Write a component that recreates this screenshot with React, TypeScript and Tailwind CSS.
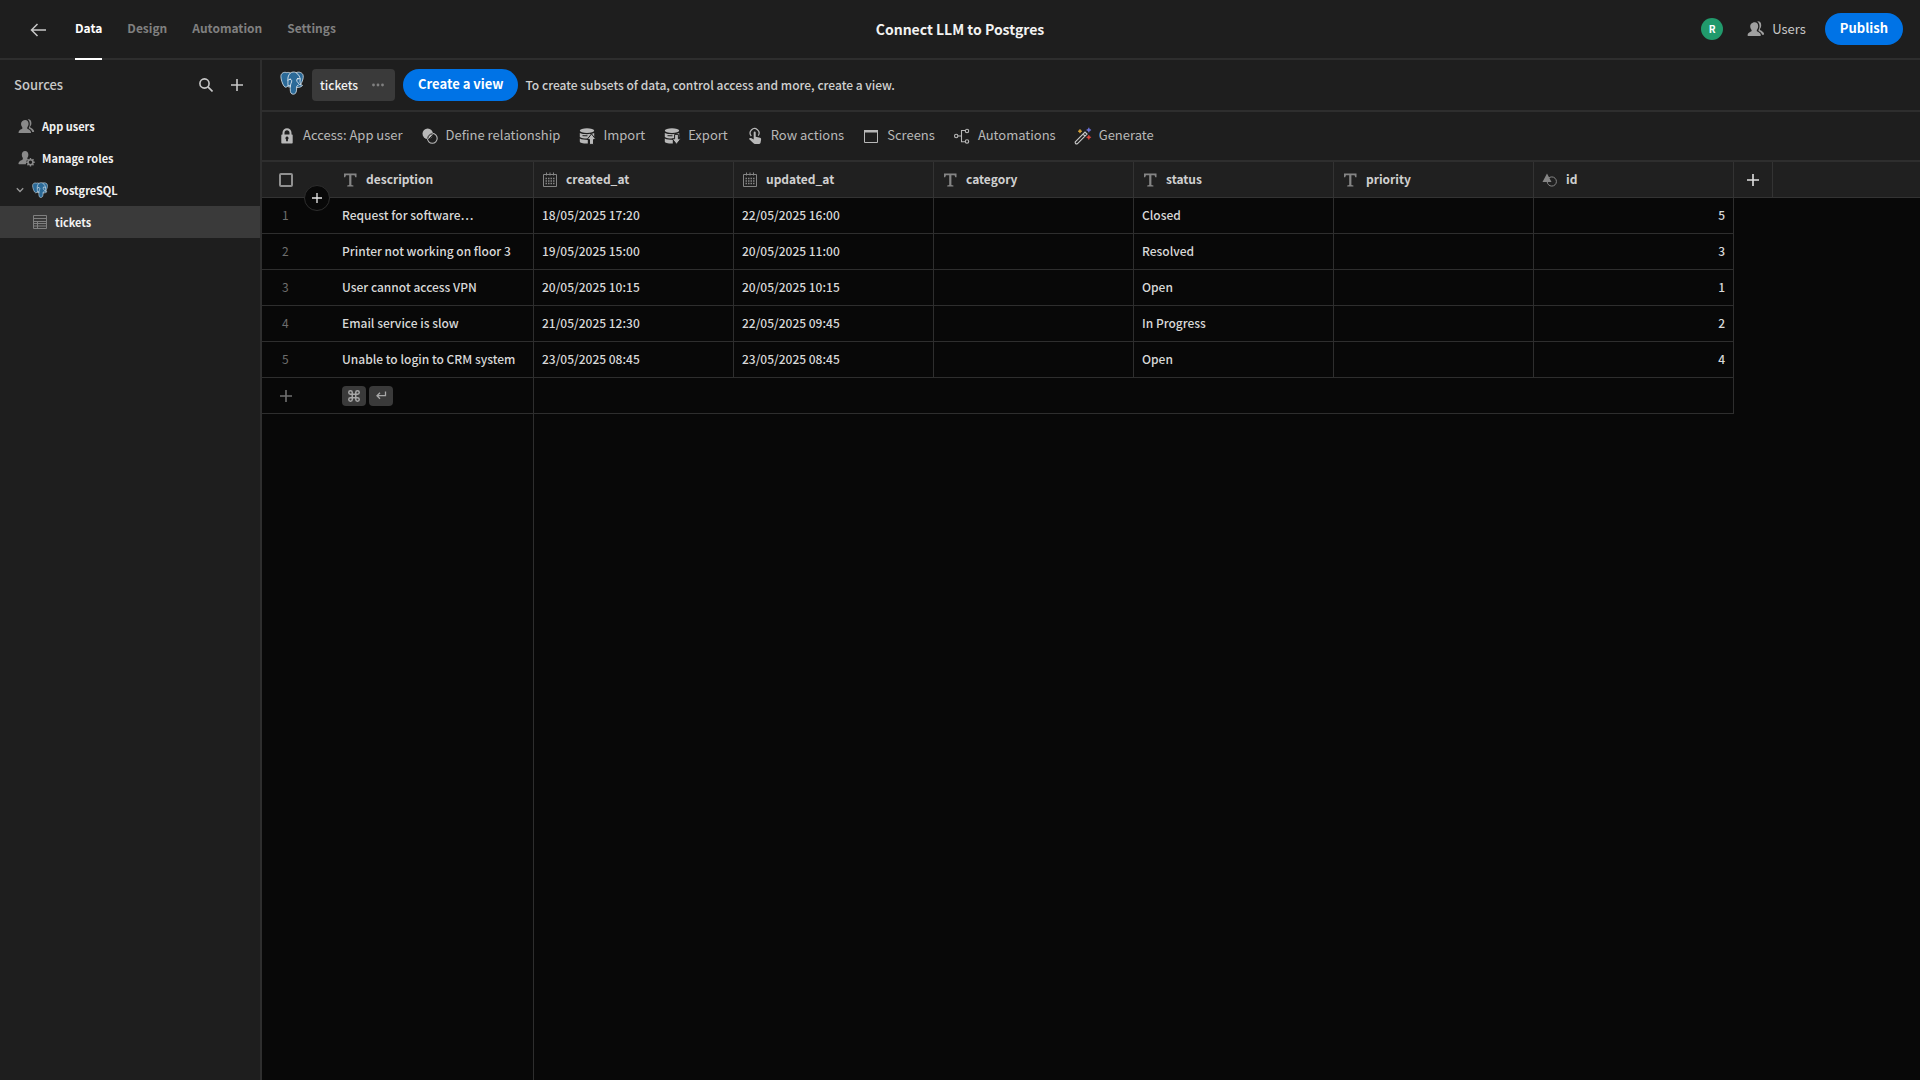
import type { ReactNode } from "react";

type IconProps = { className?: string };

function PostgresLogo({ className }: IconProps) {
  return (
    <svg viewBox="0 0 32 32" className={className} aria-hidden="true">
      <path
        d="M9 2.200C5 .8 1 3 1.200 7.600c.1 3.600 2 9.600 4.200 12.600 1.600 2.200 3.300 1.600 4.600 0 .7.9 2 1.200 3.600 1 .2 3-.3 5.500 1 8.200 1.100 2.200 5.300 2 6.600-.4 1-1.900.9-4.600 1.100-7.200 2.600.3 5.700-.2 7.500-2.200.5-.6-.2-1.200-2.600-1.100 2.600-4 4.200-9 3.700-12.200C30.400 2 25 .6 21.700 2.200 19 .9 16 1.200 13.900 2.600 12 1.800 10.400 1.700 9 2.200Z"
        fill="#2b6a98"
        stroke="#dbe7ef"
        strokeWidth="1.100"
        strokeLinejoin="round"
      />
      <path
        d="M13.700 2.800C10.300 6 10.300 10 10.600 13.500c.2 2.300-.6 3.500.2 5.200M10.600 12.200c1.800-1.500 4.600-1.300 5 .6.3 2.300-2 4.400-1.800 8.200M21.700 2.400c3.500 2.500 5.100 5.600 5.200 9.400-.6 2.800.2 4 .6 5.800M27 10.400c-2-.7-4.600-.2-4.800 1.400-.2 3 3.200 5 4.600 6.700M10 20.200c1-1.300 2.200-1.200 3.800-.6M22.200 21.900c-.2-1.900.6-2.600 2.100-3"
        fill="none"
        stroke="#dbe7ef"
        strokeWidth="1.200"
        strokeLinecap="round"
      />
      <circle cx="13.600" cy="10.800" r=".9" fill="#fff" />
      <circle cx="23.800" cy="10.200" r=".9" fill="#fff" />
    </svg>
  );
}

function UserGroupIcon({ className }: IconProps) {
  return (
    <svg viewBox="0 0 18 18" className={className} fill="currentColor" aria-hidden="true">
      <path d="M7.700 2.200c2.100 0 3.500 1.600 3.500 4 0 1.500-.6 2.900-1.400 3.800v1c0 .6 3.700 1.200 4 4 .1.600-.1 1-.6 1H1.200c-.5 0-.7-.4-.6-1 .3-2.800 4-3.400 4-4v-1c-.8-.9-1.400-2.300-1.400-3.800 0-2.400 2.400-4 4.500-4Z" />
      <path d="M10.200 1.300c2.600-.4 4 1.300 4 3.900 0 1.400-.4 2.800-1.300 3.600v1c0 .5 3.900 1.600 4.200 4.300 0 .5-.2.7-.5.700h-1.500c-.5-1.900-1.900-2.900-3.600-3.700v-1c.7-1 1-2.300 1-3.800 0-2-.8-3.900-2.300-5Z" />
    </svg>
  );
}

function UserGearIcon({ className }: IconProps) {
  return (
    <svg viewBox="0 0 18 18" className={className} fill="currentColor" aria-hidden="true">
      <path d="M7.500 1C9.600 1 11 2.600 11 5c0 1.400-.4 2.600-1.100 3.500v1l.3.400A5.800 5.800 0 0 0 8.300 15H1c-.5 0-.6-.5-.5-1 .4-2.800 4.600-3.400 4.600-4.300V8.500C4.400 7.600 4 6.400 4 5c0-2.400 1.400-4 3.500-4Z" />
      <circle cx="13.200" cy="13" r="2.600" fill="none" stroke="currentColor" strokeWidth="1.600" />
      <path
        d="M13.200 8.500v1.800m0 5.400v1.800M8.700 13h1.800m5.400 0h1.800m-7.700-3.200 1.300 1.300m3.800 3.800 1.300 1.300m0-6.400-1.300 1.300m-3.800 3.800-1.300 1.300"
        stroke="currentColor"
        strokeWidth="1.500"
      />
    </svg>
  );
}

function TableIcon({ className }: IconProps) {
  return (
    <svg viewBox="0 0 16 16" className={className} fill="none" stroke="currentColor" aria-hidden="true">
      <path d="M1.500 1.500h13v13h-13zM1.500 4.500h13M1.500 7.500h13M1.500 9.500h13M1.500 12h13M5.500 7.500v7" />
    </svg>
  );
}

function LockIcon({ className }: IconProps) {
  return (
    <svg viewBox="0 0 18 18" className={className} aria-hidden="true">
      <path d="M5.500 8V5.700a3.500 3.500 0 0 1 7 0V8" fill="none" stroke="currentColor" strokeWidth="2" />
      <path
        fillRule="evenodd"
        fill="currentColor"
        d="M4 7.500h10a.7.700 0 0 1 .7.700v7.600a.7.700 0 0 1-.7.700H4a.7.700 0 0 1-.7-.7V8.200a.7.700 0 0 1 .7-.7Zm5 2a1.600 1.600 0 0 0-.9 2.900v1.800h1.800v-1.800A1.600 1.600 0 0 0 9 9.500Z"
      />
    </svg>
  );
}

function RelationshipIcon({ className }: IconProps) {
  return (
    <svg viewBox="0 0 18 18" className={className} aria-hidden="true">
      <circle cx="6.700" cy="6.700" r="5.200" fill="currentColor" />
      <circle cx="11.300" cy="11.300" r="4.900" fill="none" stroke="currentColor" strokeWidth="1.100" />
      <path d="M6.800 11.600a4.700 4.700 0 0 1 4.700-4.800" fill="none" stroke="#1e1e1e" strokeWidth="1" />
      <path d="m8 12.200 4-4.400" stroke="#1e1e1e" strokeWidth="1" />
    </svg>
  );
}

function DatabaseArrowIcon({ className, down }: IconProps & { down?: boolean }) {
  return (
    <svg viewBox="0 0 18 18" className={className} fill="currentColor" aria-hidden="true">
      <ellipse cx="9" cy="3.600" rx="7.200" ry="2.300" />
      <path d="M1.800 6.100c3 1.600 11.400 1.600 14.400 0v4c-3 2-11.400 2-14.400 0Z" />
      <path d="M1.800 11.500c2 1.100 4.800 1.300 8 1.300v3.700c-4.300.1-8-.4-8-2Z" />
      <path d="m4.500 8.700 5 .1" stroke="#1e1e1e" />
      {down ? (
        <path d="M11.600 7.400h3.800v4.400h2.400L13.500 17.300l-4.300-5.500h2.400Z" stroke="#1e1e1e" strokeWidth="1" />
      ) : (
        <path d="M13.500 6.900 17.900 12.500h-2.400v4.900h-4v-4.900H9.100Z" stroke="#1e1e1e" strokeWidth="1" />
      )}
    </svg>
  );
}

function TapIcon({ className }: IconProps) {
  return (
    <svg viewBox="0 0 18 18" className={className} aria-hidden="true">
      <path d="M5.300 9a4.400 4.400 0 1 1 6.900-.4" fill="none" stroke="currentColor" strokeWidth="1.200" />
      <path
        fill="currentColor"
        d="M7.700 5.500a1 1 0 0 1 2 0v4.300l4.300 1c.8.200 1.200.8 1.100 1.600l-.5 3.100c-.2.900-.6 1.400-1.500 1.400H8.700c-.7 0-1.100-.3-1.500-.8L3 12l.5-.7c.4-.5 1-.5 1.600-.2l2.600 1.300Z"
      />
    </svg>
  );
}

function WindowIcon({ className }: IconProps) {
  return (
    <svg viewBox="0 0 18 18" className={className} aria-hidden="true">
      <path d="M2.500 3.500h13v12h-13z" fill="none" stroke="currentColor" />
      <path d="M2 3h14v2.500H2z" fill="currentColor" />
    </svg>
  );
}

function WorkflowIcon({ className }: IconProps) {
  return (
    <svg viewBox="0 0 18 18" className={className} fill="none" stroke="currentColor" strokeWidth="1.100" aria-hidden="true">
      <circle cx="3.200" cy="9" r="1.700" />
      <circle cx="14" cy="4" r="1.700" />
      <circle cx="14" cy="14.500" r="1.700" />
      <path d="M4.900 9h3.600M12.300 3.500H8.500v11.200h3.800" />
    </svg>
  );
}

function WandIcon({ className }: IconProps) {
  return (
    <svg viewBox="0 0 18 18" className={className} aria-hidden="true">
      <path
        d="M1.300 14.800 11 5.100l2 2-9.700 9.700c-1.300.6-2.500-.6-2-2ZM9 7l2 2"
        fill="none"
        stroke="#c8c8c8"
        strokeWidth="1.200"
      />
      <path d="m6 2.200.6 1.400 1.400.6-1.400.6L6 6.200l-.6-1.400L4 4.200l1.400-.6Z" fill="#e8b13c" stroke="#e8b13c" strokeWidth=".5" />
      <path d="m14.800.7.700 1.600 1.600.7-1.600.7-.7 1.600-.7-1.600-1.600-.7 1.600-.7Z" fill="#7077e0" stroke="#7077e0" strokeWidth=".5" />
      <path d="m14.800 8 .7 1.600 1.600.7-1.600.7-.7 1.600-.7-1.600-1.600-.7 1.600-.7Z" fill="#e0483e" stroke="#e0483e" strokeWidth=".5" />
    </svg>
  );
}

function TextIcon({ className }: IconProps) {
  return (
    <svg viewBox="0 0 18 18" className={className} fill="currentColor" aria-hidden="true">
      <path d="M3 2.500h12.500v3.800h-1.200l-.8-2h-3.100v9.600l2 .5v1.100H6.200v-1.100l2-.5V4.300H5l-.8 2H3Z" />
    </svg>
  );
}

function CalendarIcon({ className }: IconProps) {
  return (
    <svg viewBox="0 0 18 18" className={className} fill="none" stroke="currentColor" aria-hidden="true">
      <path d="M2.500 3.500h13v12h-13zM5.500 1.500v3M12.500 1.500v3M9 1.500v3" />
      <path d="M4.500 7.500h9M4.500 10h9M4.500 12.500h9" strokeWidth="1.500" strokeDasharray="1.500 1" />
    </svg>
  );
}

function ShapesIcon({ className }: IconProps) {
  return (
    <svg viewBox="0 0 18 18" className={className} aria-hidden="true">
      <circle cx="10.800" cy="10.500" r="4.600" fill="none" stroke="currentColor" />
      <path d="M6 2.500 10.500 11h-9Z" fill="currentColor" />
    </svg>
  );
}

function PlusIcon({ className }: IconProps) {
  return (
    <svg viewBox="0 0 12 12" className={className} stroke="currentColor" aria-hidden="true">
      <path d="M6 0v12M0 6h12" strokeWidth="1.600" />
    </svg>
  );
}

const navItems = ["Data", "Design", "Automation", "Settings"];

const tools: { label: string; icon: ReactNode }[] = [
  { label: "Access: App user", icon: <LockIcon className="size-[18px]" /> },
  { label: "Define relationship", icon: <RelationshipIcon className="size-[18px]" /> },
  { label: "Import", icon: <DatabaseArrowIcon className="size-[18px]" /> },
  { label: "Export", icon: <DatabaseArrowIcon down className="size-[18px]" /> },
  { label: "Row actions", icon: <TapIcon className="size-[18px]" /> },
  { label: "Screens", icon: <WindowIcon className="size-[18px]" /> },
  { label: "Automations", icon: <WorkflowIcon className="size-[18px]" /> },
  { label: "Generate", icon: <WandIcon className="size-[18px]" /> },
];

const columns = [
  { name: "description", icon: TextIcon },
  { name: "created_at", icon: CalendarIcon },
  { name: "updated_at", icon: CalendarIcon },
  { name: "category", icon: TextIcon },
  { name: "status", icon: TextIcon },
  { name: "priority", icon: TextIcon },
  { name: "id", icon: ShapesIcon },
];

const rows = [
  ["Request for software…", "18/05/2025 17:20", "22/05/2025 16:00", "", "Closed", "", "5"],
  ["Printer not working on floor 3", "19/05/2025 15:00", "20/05/2025 11:00", "", "Resolved", "", "3"],
  ["User cannot access VPN", "20/05/2025 10:15", "20/05/2025 10:15", "", "Open", "", "1"],
  ["Email service is slow", "21/05/2025 12:30", "22/05/2025 09:45", "", "In Progress", "", "2"],
  ["Unable to login to CRM system", "23/05/2025 08:45", "23/05/2025 08:45", "", "Open", "", "4"],
];

function Header() {
  return (
    <header className="grid h-[60px] shrink-0 grid-cols-[1fr_auto_1fr] border-b-2 border-[#2e2e2e]">
      <div className="flex items-center pl-[30px]">
        <button aria-label="Back" className="mr-[27px] text-[#c8c8c8]">
          <svg viewBox="0 0 18 18" className="size-[18px]" fill="none" stroke="currentColor" strokeWidth="1.500" aria-hidden="true">
            <path d="M16 10H2M7.500 4 1.500 10l6 6" />
          </svg>
        </button>
        <nav className="flex gap-[25px] self-stretch text-[12px]">
          {navItems.map((item) => (
            <a
              key={item}
              href="#"
              className={
                item === "Data"
                  ? "-mb-0.5 flex items-center border-b-2 border-white pb-0.5 font-bold text-white"
                  : "-mb-0.5 flex items-center border-b-2 border-transparent pb-0.5 font-bold text-[#808080]"
              }
            >
              {item}
            </a>
          ))}
        </nav>
      </div>
      <h1 className="self-center text-[14px] font-semibold text-[#f2f2f2]">Connect LLM to Postgres</h1>
      <div className="flex items-center justify-end pr-[17px]">
        <span className="mr-6 flex size-[22px] items-center justify-center rounded-full bg-[#219a6c] text-[10px] font-bold text-white">
          R
        </span>
        <button className="mr-[19px] flex items-center gap-[7px] text-[#c8c8c8]">
          <UserGroupIcon className="size-[18px] text-[#a0a0a0]" />
          Users
        </button>
        <button className="h-8 rounded-full bg-[#0073e6] px-[15px] pb-0.5 font-bold text-white">Publish</button>
      </div>
    </header>
  );
}

function Sidebar() {
  return (
    <aside className="w-[262px] shrink-0 border-r-2 border-[#2e2e2e]">
      <div className="flex h-[50px] items-center pr-[17px] pl-3.5 text-[#c8c8c8]">
        <h2 className="flex-1 font-medium">Sources</h2>
        <button aria-label="Search sources" className="mr-[18px]">
          <svg viewBox="0 0 14 14" className="size-3.5" fill="none" stroke="currentColor" strokeWidth="1.600" aria-hidden="true">
            <circle cx="5.500" cy="5.500" r="4.600" />
            <path d="m8.900 8.900 4.600 4.600" />
          </svg>
        </button>
        <button aria-label="Add source">
          <PlusIcon className="size-3" />
        </button>
      </div>
      <ul className="text-[11px] leading-4 font-bold text-[#f2f2f2]">
        <li>
          <a href="#" className="flex h-8 items-center gap-[7px] pl-[18px]">
            <UserGroupIcon className="size-[17px] text-[#8a8a8a]" />
            App users
          </a>
        </li>
        <li>
          <a href="#" className="flex h-8 items-center gap-[7px] pl-[18px]">
            <UserGearIcon className="size-[17px] text-[#8a8a8a]" />
            Manage roles
          </a>
        </li>
        <li>
          <a href="#" className="flex h-8 items-center pl-4">
            <svg viewBox="0 0 8 8" className="mr-2 size-2" fill="none" stroke="#9a9a9a" strokeWidth="1.300" aria-hidden="true">
              <path d="m.8 2.300 3.200 3.200 3.200-3.200" />
            </svg>
            <PostgresLogo className="mr-[7px] size-4" />
            PostgreSQL
          </a>
        </li>
        <li>
          <a href="#" className="flex h-8 items-center gap-[7px] bg-[#3a3a3a] pl-8">
            <TableIcon className="size-4 text-[#808080]" />
            tickets
          </a>
        </li>
      </ul>
    </aside>
  );
}

function TicketsTable() {
  return (
    <table className="w-full table-fixed border-separate border-spacing-0 text-left text-[12px]">
      <colgroup>
        <col className="w-[72px]" />
        {columns.map((column) => (
          <col key={column.name} className="w-[200px]" />
        ))}
        <col className="w-[39px]" />
        <col />
      </colgroup>
      <thead className="bg-[#202020]">
        <tr className="h-9">
          <th className="relative border-b border-[#333] p-0 pl-[17px]">
            <input
              type="checkbox"
              aria-label="Select all rows"
              className="block size-3.5 appearance-none rounded-[2px] border-2 border-[#909090]"
            />
            <button
              aria-label="Insert row"
              className="absolute top-[23px] left-[42px] z-10 flex size-[26px] items-center justify-center rounded-full border border-[#2e2e2e] bg-[#080808] text-[#e6e6e6]"
            >
              <PlusIcon className="size-2.5" />
            </button>
          </th>
          {columns.map(({ name, icon: Icon }) => (
            <th key={name} className="border-r border-b border-[#333] px-[7px] py-0 font-bold text-[#d0d0d0]">
              <div className="flex items-center gap-[7px]">
                <Icon className="size-[18px] text-[#858585]" />
                <span className="pb-0.5">{name}</span>
              </div>
            </th>
          ))}
          <th className="border-r border-b border-[#333] p-0">
            <button aria-label="Add column" className="mx-auto block text-[#e0e0e0]">
              <PlusIcon className="size-3" />
            </button>
          </th>
          <th className="border-b border-[#333] p-0" />
        </tr>
      </thead>
      <tbody className="font-medium text-[#d8d8d8]">
        {rows.map((row, index) => (
          <tr key={row[0]} className="h-9">
            <td className="border-b border-[#2e2e2e] p-0 pb-0.5 pl-5 font-normal text-[#6e6e6e]">{index + 1}</td>
            {row.map((value, i) => (
              <td
                key={columns[i].name}
                className={
                  columns[i].name === "id"
                    ? "border-r border-b border-[#2e2e2e] px-2 pt-0 pb-0.5 text-right"
                    : "border-r border-b border-[#2e2e2e] px-2 pt-0 pb-0.5 whitespace-nowrap"
                }
              >
                {value}
              </td>
            ))}
          </tr>
        ))}
        <tr className="h-9">
          <td className="border-b border-[#2e2e2e] p-0 pl-[18px]">
            <button aria-label="Add row" className="block text-[#707070]">
              <PlusIcon className="size-3" />
            </button>
          </td>
          <td className="border-r border-b border-[#2e2e2e] px-2 py-0">
            <div className="flex gap-[3px] text-[#a8a8a8]">
              <kbd className="flex h-5 w-6 items-center justify-center rounded bg-[#3a3a3a]">
                <svg viewBox="0 0 24 24" className="size-3.5" fill="none" stroke="currentColor" strokeWidth="2.500" aria-label="Command">
                  <path d="M15 6v12a3 3 0 1 0 3-3H6a3 3 0 1 0 3 3V6a3 3 0 1 0-3 3h12a3 3 0 1 0-3-3" />
                </svg>
              </kbd>
              <kbd className="flex h-5 w-6 items-center justify-center rounded bg-[#3a3a3a]">
                <svg viewBox="0 0 12 12" className="size-3" fill="none" stroke="currentColor" strokeWidth="1.300" aria-label="Enter">
                  <path d="M10.500 1.500v4.200H2.500M5 2.700l-3 3 3 3" />
                </svg>
              </kbd>
            </div>
          </td>
          <td colSpan={6} className="border-r border-b border-[#2e2e2e] p-0" />
        </tr>
      </tbody>
    </table>
  );
}

export default function App() {
  return (
    <div className="flex min-h-screen flex-col bg-[#1e1e1e] font-['Noto_Sans_CJK_SC',sans-serif] text-[13px] leading-5">
      <Header />
      <div className="flex flex-1">
        <Sidebar />
        <main className="flex min-w-0 flex-1 flex-col">
          <div className="flex h-[52px] items-center border-b-2 border-[#2e2e2e] pl-[18px]">
            <PostgresLogo className="mr-2 mb-1 size-6" />
            <button className="mr-2 flex h-8 items-center gap-3.5 rounded bg-[#3a3a3a] pr-[11px] pl-2 text-[12px] font-medium text-[#f2f2f2]">
              tickets
              <svg viewBox="0 0 12 4" className="h-1 w-3" fill="#808080" aria-hidden="true">
                <circle cx="1.500" cy="2" r="1.400" />
                <circle cx="6" cy="2" r="1.400" />
                <circle cx="10.500" cy="2" r="1.400" />
              </svg>
            </button>
            <button className="mr-[7px] h-8 rounded-full bg-[#0073e6] px-[15px] pb-0.5 font-bold text-white">
              Create a view
            </button>
            <p className="text-[12px] font-medium text-[#d0d0d0]">
              To create subsets of data, control access and more, create a view.
            </p>
          </div>
          <div className="flex h-[50px] items-center gap-[18px] border-b-2 border-[#2e2e2e] pl-4 text-[#b8b8b8]">
            {tools.map((tool) => (
              <button key={tool.label} className="flex items-center gap-[7px]">
                {tool.icon}
                <span className="pb-0.5">{tool.label}</span>
              </button>
            ))}
          </div>
          <div className="flex flex-1 flex-col bg-[#080808]">
            <TicketsTable />
            <div className="w-[272px] flex-1 border-r border-[#2e2e2e]" />
          </div>
        </main>
      </div>
    </div>
  );
}
